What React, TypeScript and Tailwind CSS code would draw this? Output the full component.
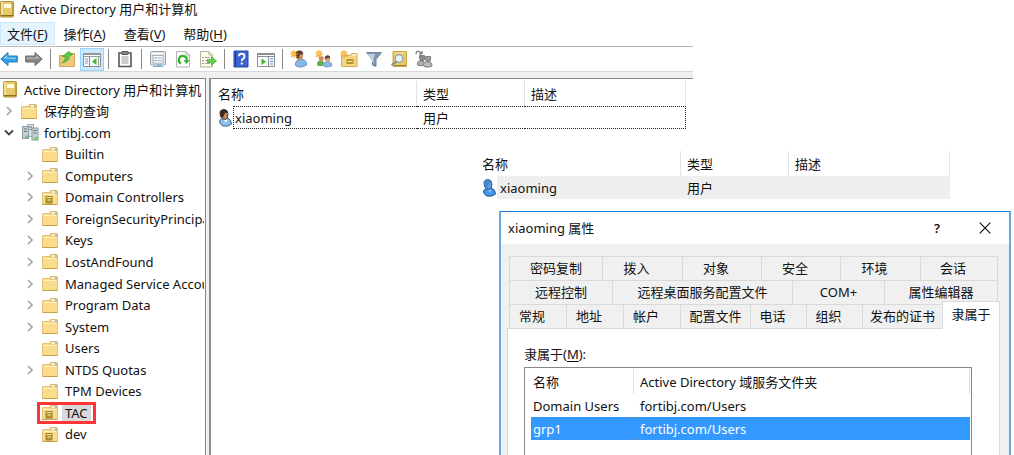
import type { ReactNode } from 'react';
import clsx from 'clsx';

/* ---------- icons ---------- */

function ConsoleIcon() {
    return (
        <svg viewBox="0 0 14 17" className="h-[17px] w-[14px] shrink-0" aria-hidden="true">
            <rect x="0.5" y="0.5" width="13" height="15.5" rx="1" fill="#c9a23c" stroke="#b8963c" />
            <rect x="1" y="1" width="11" height="13" fill="#e6c968" />
            <rect x="1" y="1" width="2" height="13" fill="#f4e3a0" />
            <rect x="4" y="3" width="7" height="4" fill="#fffbe6" />
            <path d="M1 14.5h12" stroke="#8d6d1c" />
        </svg>
    );
}

function FolderIcon({ unit = false }: { unit?: boolean }) {
    return (
        <svg viewBox="0 0 16 15" className="h-[15px] w-4 shrink-0" aria-hidden="true">
            <path d="M8 3.5V1.5Q8 .5 9 .5H14.5Q15.5 .5 15.5 1.5V5H8z" fill="#f5dc94" stroke="#dcb868" />
            <path d="M10 2h3" stroke="#fff" />
            <path d="M13 2h2" stroke="#5aa2dc" />
            <path d="M.5 3Q.5 2.5 1 2.5H8L9.5 4H15.5V14.5H.5z" fill="#fbdc8c" stroke="#e2c078" />
            <path d="M1.5 4.5H14.500" stroke="#fff0c0" />
            <path d="M.5 14.500H15.5" stroke="#c9a04a" />
            {unit && (
                <>
                    <rect x="4" y="6.500" width="6" height="6.500" fill="#b4942c" stroke="#9c8028" />
                    <path d="M4.500 7.500h5M5.500 10h3.500" stroke="#f4e6a4" />
                </>
            )}
        </svg>
    );
}

function DomainIcon() {
    return (
        <svg viewBox="0 0 17 17" className="h-[17px] w-[17px] shrink-0" aria-hidden="true">
            <rect x="5.500" y="0.500" width="6" height="12" fill="#dfe6ea" stroke="#9ba7b0" />
            <rect x="0.500" y="2.500" width="6" height="12" fill="#c8d1d8" stroke="#8c99a3" />
            <rect x="10" y="4" width="6" height="12" fill="#c8d1d8" stroke="#8c99a3" />
            <path d="M7 3h3M2 5h3M2 7.500h3M11.500 6.500h3M11.500 9h3M7.500 5.500h2" stroke="#5f6d78" />
            <rect x="3" y="11.500" width="3" height="2.500" fill="#5ad83c" />
            <rect x="12.500" y="13" width="3" height="2.500" fill="#5ad83c" />
        </svg>
    );
}

function Chevron({ open = false }: { open?: boolean }) {
    return (
        <svg viewBox="0 0 10 10" className="h-[10px] w-[10px]" fill="none" aria-hidden="true">
            {open ? (
                <path d="M1 2.500L5 6.500L9 2.500" stroke="#404040" strokeWidth="1.800" />
            ) : (
                <path d="M3 1L7 5L3 9" stroke="#a6a6a6" strokeWidth="1.700" />
            )}
        </svg>
    );
}

function UserIcon({ selected = false }: { selected?: boolean }) {
    return (
        <svg viewBox="0 0 15 18" className="h-[18px] w-[15px] shrink-0" aria-hidden="true">
            <path
                d="M1.500 12Q2 10 5 9.500L9.500 9Q13.500 10.500 13.500 15Q10 18.200 5 17Q1.500 15.500 1.500 12z"
                fill={selected ? '#3f97e8' : '#8dbdea'}
                stroke={selected ? '#1d5390' : '#3f6c98'}
            />
            <path
                d="M2 3Q2.500 .8 6 .6Q9.800 .8 9.800 4.500Q10 10 7.500 10.500Q4 10.500 2.500 7.500z"
                fill={selected ? '#5b9ddb' : '#c28a62'}
                stroke={selected ? '#1d5390' : '#4a2c1a'}
            />
            <path
                d="M2 3Q2.500 .8 6 .6Q9.800 .8 9.800 4Q7 3 6.500 5L5 8.500L2.500 7.500z"
                fill={selected ? '#4684c4' : '#3c2a20'}
            />
            <path d="M6 11l2 3l1.500-3.500" fill={selected ? '#8cc4f4' : '#fff'} />
        </svg>
    );
}

function Glyph({ children }: { children: ReactNode }) {
    return (
        <svg viewBox="0 0 18 18" className="h-[18px] w-[18px] shrink-0" fill="none" aria-hidden="true">
            {children}
        </svg>
    );
}

const spark = (
    <>
        <path d="M4 0v8M0 4h8M1.200 1.200l5.600 5.600M6.800 1.200L1.200 6.800" stroke="#f0a020" strokeWidth="1.100" />
        <circle cx="4" cy="4" r="1.600" fill="#ffc94a" />
    </>
);

const glyphs: Record<string, ReactNode> = {
    back: (
        <>
            <path d="M.8 9L8 2.500V6H17.300V12H8V15.500z" fill="#2f9fe4" stroke="#2a7db8" />
            <path d="M3 8.500L7 5V7.500H16V9z" fill="#85d0f8" />
        </>
    ),
    forward: (
        <>
            <path d="M17.200 9L10 2.500V6H.7V12H10V15.500z" fill="#868686" stroke="#6c6c6c" />
            <path d="M15 8.500L11 5V7.500H2V9z" fill="#b4b4b4" />
        </>
    ),
    up: (
        <>
            <path d="M1.500 5.500H8L10 3.500H16.500V16.500H1.500z" fill="#ecc97c" stroke="#cda458" />
            <path d="M11 5h5" stroke="#fff2cc" />
            <path
                d="M3.500 13Q7.500 11 7.500 6.500L4.500 6.500L10.500 1.500L15 4.500L11.500 6Q11 11.500 3.500 13z"
                fill="#5fc63e"
                stroke="#3f9f2c"
                strokeWidth=".7"
            />
        </>
    ),
    tree: (
        <>
            <path d="M.5 3.500H17.500V16.500H.5z" fill="#fafafa" stroke="#8a8f94" />
            <path d="M1 4.500H17M1 6.500H17" stroke="#9a9fa4" />
            <path d="M6.500 7V16" stroke="#8a8f94" />
            <path d="M2 9h3M2 11h3M2 13h3" stroke="#7fa4c8" />
            <path d="M13.500 8v7L9 11.500z" fill="#3eb82c" />
            <path d="M15.500 7v9" stroke="#9a9fa4" />
        </>
    ),
    clipboard: (
        <>
            <path d="M3 3H15V16.500H3z" fill="#fff" stroke="#585858" strokeWidth="1.600" />
            <path d="M6 1.500h6v3H6z" fill="#888" stroke="#585858" />
            <path d="M5.500 7h7M5.500 9h7M5.500 11h7M5.500 13h7" stroke="#9a9a9a" />
        </>
    ),
    properties: (
        <>
            <rect x="1.500" y="1.500" width="15" height="13.500" rx="1" fill="#dfe5ea" stroke="#9aa1a7" />
            <path d="M3 3.500h11" stroke="#fff" />
            <rect x="4" y="5.500" width="10" height="7.500" fill="#fff" stroke="#a4b0ba" />
            <path d="M5.500 8h2M5.500 10.500h2" stroke="#4884c4" />
            <path d="M8.500 8h4M8.500 10.500h4" stroke="#9aa4ac" />
            <path d="M4 16.500h10" stroke="#9aa1a7" />
            <path d="M8 14.500h4v2h-4z" fill="#6cb4e4" />
        </>
    ),
    refresh: (
        <>
            <path d="M2.500 1.500H12L15.500 5V17H2.500z" fill="#fdfdfd" stroke="#b4b4b4" />
            <path d="M12 1.500V5h3.500" stroke="#b4b4b4" />
            <path
                d="M7 13.500A4 4 0 1 1 12.800 10.500"
                stroke="#38b22c"
                strokeWidth="2.200"
            />
            <path d="M9.500 10h6l-3 4z" fill="#38b22c" />
        </>
    ),
    export: (
        <>
            <path d="M1.500 1.500H10L13.500 5V17H1.500z" fill="#fffbea" stroke="#b8b29a" />
            <path d="M10 1.500V5h3.500" stroke="#b8b29a" />
            <path d="M3.500 7.500h1M3.500 10.500h1M3.500 13.500h1" stroke="#444" />
            <path d="M6 7.500h5M6 10.500h3M6 13.500h5" stroke="#a4a4a4" />
            <path
                d="M8.500 9.500H12.500V6.800L17.500 11L12.500 15.200V12.500H8.500z"
                fill="#6ad04a"
                stroke="#3da42c"
                strokeWidth=".7"
            />
        </>
    ),
    help: (
        <>
            <path d="M2 1H16V17H2z" fill="#3c62d0" stroke="#2c48a4" />
            <path d="M3.500 1.500V16.500" stroke="#20388c" />
            <path
                d="M7 6.200Q7 3.800 9.700 3.800Q12.500 3.800 12.500 6.200Q12.500 7.800 11 8.700Q9.800 9.500 9.800 11"
                stroke="#fff"
                strokeWidth="1.900"
            />
            <rect x="8.800" y="12.500" width="2" height="2" fill="#fff" />
        </>
    ),
    console: (
        <>
            <path d="M.5 3.500H17.500V16.500H.5z" fill="#fafafa" stroke="#8a8f94" />
            <path d="M1 4.500H17M1 6.500H17" stroke="#8a8f94" />
            <path d="M11.500 7V16" stroke="#8a8f94" />
            <path d="M13 9h3M13 11.500h3M13 14h3" stroke="#5e8fc0" />
            <path d="M4.500 8.500v6.500L9 11.700z" fill="#3eb82c" />
        </>
    ),
    user: (
        <>
            <path
                d="M5.500 13Q6 10.500 9 9.500H13Q17 10.500 16.500 15Q12 18.500 6.500 16.500Q5 15.500 5.500 13z"
                fill="#86b8e8"
                stroke="#6a9ac8"
            />
            <path d="M5.500 3Q6 1 9.500 .8Q13 1 13 5Q13 10 10.500 10.500Q7 10.500 6 7z" fill="#c98d60" />
            <path d="M5.500 3Q6 .8 9.500 .6Q13.500 .8 13.200 5Q10.500 3 9.500 5.500L8.500 8.500L6 7.500z" fill="#5b4030" />
            {spark}
        </>
    ),
    group: (
        <>
            <path d="M2 14Q2 10.500 5.500 10.500Q9.500 10.500 9.500 15Q6 17 2.500 15.500z" fill="#5fae4a" />
            <path d="M4 6.500h4.500v3.500q-1 2-2.500 1.500q-2-.5-2-2.500z" fill="#c98d60" />
            <path d="M8.500 14.500Q9 11.500 12.500 11.500Q17 11.500 17 16Q12.500 18 9 16.500z" fill="#86b8e8" stroke="#6a9ac8" strokeWidth=".7" />
            <path d="M10 6.500h5v4q-1 2-2.500 1.500q-2.500-.5-2.500-3z" fill="#d8a070" />
            <path d="M9.700 9.500Q9.500 5.500 12.500 5.200Q15.500 5.500 15.200 8.500Q13 7 11.500 8.500z" fill="#5b4030" />
            {spark}
        </>
    ),
    unit: (
        <>
            <path d="M1.500 5.500H10L11.500 3.500H17V16.500H1.500z" fill="#f6d684" stroke="#d4ac58" />
            <path d="M12 5h4.500" stroke="#fff" />
            <rect x="6.500" y="9" width="7" height="5" fill="#b4942c" />
            <path d="M7.500 11.500h5" stroke="#f4e6a4" />
            {spark}
        </>
    ),
    filter: (
        <>
            <path d="M1.500 2.500H16.500L11 9.500V16.500L7.500 15V9.500z" fill="#7c98b0" stroke="#6c879e" />
            <path d="M3 4H10L8.500 9V14z" fill="#bcd0e0" />
        </>
    ),
    find: (
        <>
            <path d="M3 1.500H16.500V16.500H3z" fill="#e6c968" stroke="#c4a446" />
            <path d="M3.500 15.500H16.500" stroke="#a8862c" />
            <path d="M4 3h11" stroke="#f8e8a8" />
            <circle cx="9" cy="8.500" r="3.800" fill="#e8f4fc" stroke="#8a98a4" strokeWidth="1.200" />
            <path d="M6.500 11.500L1.500 15" stroke="#868e94" strokeWidth="2" />
        </>
    ),
    link: (
        <>
            <path d="M1 4.500Q1 1 3.500 1L6.500 3.500M7 4V1M7 4H4" stroke="#777" strokeWidth="1.200" />
            <path d="M2.500 14Q2.500 10.500 6 10.500Q9.500 10.500 9.500 14.500Q6 16.500 3 15.500z" fill="#b0b0b0" stroke="#7c7c7c" />
            <path d="M4.500 5.500h5v4q-1 2-2.500 1.500q-2.500-.5-2.500-3z" fill="#8a8a8a" stroke="#666" strokeWidth=".7" />
            <path d="M8.500 14.500Q9 11.500 12.500 11.500Q17 11.500 17 16Q12.500 18 9 16.500z" fill="#bcbcbc" stroke="#7c7c7c" />
            <path d="M10.500 6.500h5v4q-1 2-2.500 1.500q-2.500-.5-2.500-3z" fill="#9a9a9a" stroke="#666" strokeWidth=".7" />
        </>
    ),
};

/* ---------- data ---------- */

const menus = [
    { label: '文件', key: 'F', active: true },
    { label: '操作', key: 'A' },
    { label: '查看', key: 'V' },
    { label: '帮助', key: 'H' },
];

const toolbar = [
    ['back', '后退'],
    ['forward', '前进'],
    null,
    ['up', '上一级'],
    ['tree', '显示控制台树'],
    null,
    ['clipboard', '剪贴板'],
    null,
    ['properties', '属性'],
    ['refresh', '刷新'],
    ['export', '导出列表'],
    null,
    ['help', '帮助'],
    ['console', '操作窗格'],
    null,
    ['user', '新建用户'],
    ['group', '新建组'],
    ['unit', '新建组织单位'],
    ['filter', '筛选器'],
    ['find', '查找'],
    ['link', '添加到组'],
] as const;

const containers: { name: string; expandable?: boolean; unit?: boolean; selected?: boolean }[] = [
    { name: 'Builtin' },
    { name: 'Computers', expandable: true },
    { name: 'Domain Controllers', expandable: true, unit: true },
    { name: 'ForeignSecurityPrincipals', expandable: true },
    { name: 'Keys', expandable: true },
    { name: 'LostAndFound', expandable: true },
    { name: 'Managed Service Accounts', expandable: true },
    { name: 'Program Data', expandable: true },
    { name: 'System', expandable: true },
    { name: 'Users' },
    { name: 'NTDS Quotas', expandable: true },
    { name: 'TPM Devices' },
    { name: 'TAC', unit: true, selected: true },
    { name: 'dev', unit: true },
];

const tabRows = [
    {
        cols: 'mr-[2px] grid-cols-[93fr_80fr_79fr_79fr_80fr_78fr]',
        tabs: ['密码复制', '拨入', '对象', '安全', '环境', '会话'],
    },
    {
        cols: 'mr-[2px] grid-cols-[103fr_180fr_92fr_114fr]',
        tabs: ['远程控制', '远程桌面服务配置文件', 'COM+', '属性编辑器'],
    },
    {
        cols: 'grid-cols-[57fr_57fr_57fr_70fr_56fr_56fr_80fr_58fr]',
        tabs: ['常规', '地址', '帐户', '配置文件', '电话', '组织', '发布的证书', '隶属于'],
    },
];

/* ---------- parts ---------- */

function Toolbar() {
    return (
        <div className="flex h-6 items-center gap-[7px]">
            {toolbar.map((item, i) =>
                item ? (
                    <button
                        key={item[0]}
                        type="button"
                        aria-label={item[1]}
                        className={clsx(
                            'flex shrink-0 items-center justify-center',
                            item[0] === 'tree'
                                ? '-mx-[3px] h-[23px] w-6 border border-[#99d1ff] bg-[#cce8ff]'
                                : 'h-6 w-[18px]',
                        )}
                    >
                        <Glyph>{glyphs[item[0]]}</Glyph>
                    </button>
                ) : (
                    <span key={i} className="h-5 w-px bg-[#8c8c8c]" />
                ),
            )}
        </div>
    );
}

function Tree() {
    return (
        <nav className="w-[206px] shrink-0 overflow-hidden border-t border-r border-[#828790] pr-px">
            <ul className="grid h-[366px] auto-rows-fr overflow-hidden whitespace-nowrap">
                <li className="flex items-center gap-[7px] pl-[3px]">
                    <ConsoleIcon />
                    <span>Active Directory 用户和计算机</span>
                </li>
                <li className="flex items-center pl-1">
                    <span className="w-[17px]">
                        <Chevron />
                    </span>
                    <FolderIcon />
                    <span className="pl-[7px]">保存的查询</span>
                </li>
                <li className="flex items-center pl-1">
                    <span className="w-[18px]">
                        <Chevron open />
                    </span>
                    <DomainIcon />
                    <span className="pl-[5px]">fortibj.com</span>
                </li>
                {containers.map((c) => (
                    <li key={c.name} className="flex items-center pl-[25px]">
                        <span className="w-[17px] shrink-0">{c.expandable && <Chevron />}</span>
                        <span className="relative flex items-center">
                            <FolderIcon unit={c.unit} />
                            <span className={clsx('ml-1 px-[3px]', c.selected && 'bg-[#d9d9d9]')}>{c.name}</span>
                            {c.selected && (
                                <span className="absolute -inset-x-[5px] -inset-y-[2px] border-[3px] border-[#fb3538]" />
                            )}
                        </span>
                    </li>
                ))}
            </ul>
        </nav>
    );
}

function ObjectList({ highlighted = false }: { highlighted?: boolean }) {
    const cell = highlighted ? 'bg-[#efefef]' : 'border-y border-dotted border-[#222]';
    return (
        <table className="w-[468px] table-fixed border-separate border-spacing-0 text-left">
            <thead>
                <tr className="h-[25px]">
                    <th className="w-[199px] border-r border-[#e2e2e2] p-0 font-normal">名称</th>
                    <th className="w-[108px] border-r border-[#e2e2e2] p-0 pl-[6px] font-normal">类型</th>
                    <th className="border-r border-[#e2e2e2] p-0 pl-[6px] font-normal">描述</th>
                </tr>
            </thead>
            <tbody>
                <tr className="h-[23px]">
                    <td className="p-0">
                        <div className="flex h-[23px] items-center">
                            <UserIcon selected={highlighted} />
                            <span
                                className={clsx(
                                    'flex h-full flex-1 items-center',
                                    cell,
                                    highlighted ? 'pl-[3px]' : 'border-l pl-px',
                                )}
                            >
                                xiaoming
                            </span>
                        </div>
                    </td>
                    <td className={clsx('p-0 pl-[6px]', cell)}>用户</td>
                    <td className={clsx('p-0', cell, !highlighted && 'border-r')} />
                </tr>
            </tbody>
        </table>
    );
}

function Tabs() {
    return (
        <div role="tablist" className="mr-[9px] ml-2 pt-3">
            {tabRows.map((row) => (
                <div key={row.tabs[0]} className={clsx('grid h-6', row.cols)}>
                    {row.tabs.map((tab) => {
                        const current = tab === '隶属于';
                        return (
                            <button
                                key={tab}
                                type="button"
                                role="tab"
                                aria-selected={current}
                                className={clsx(
                                    'border-t border-l whitespace-nowrap',
                                    current
                                        ? 'relative -mt-[3px] -mb-px border-r border-[#dadada] bg-white pb-1'
                                        : 'border-[#d9d9d9] pb-[2px] last:border-r',
                                    tab.length === 2 && 'pr-3',
                                )}
                            >
                                {tab}
                            </button>
                        );
                    })}
                </div>
            ))}
        </div>
    );
}

function PropertiesDialog() {
    return (
        <section
            role="dialog"
            aria-labelledby="dialog-title"
            className="mr-[3px] ml-[288px] flex flex-1 flex-col border-x-2 border-t border-x-[#65a8e0] border-t-[#1a7fd0] bg-[#f0f0f0]"
        >
            <header className="flex h-8 items-center bg-white pl-[7px]">
                <h2 id="dialog-title" className="flex-1">
                    xiaoming 属性
                </h2>
                <button type="button" aria-label="帮助" className="w-12 text-[13px] font-semibold">
                    ?
                </button>
                <button type="button" aria-label="关闭" className="flex w-12 justify-center">
                    <svg viewBox="0 0 12 12" className="h-3 w-3" aria-hidden="true">
                        <path d="M.7 .7L11.300 11.300M11.300 .7L.7 11.300" stroke="#111" strokeWidth="1.200" />
                    </svg>
                </button>
            </header>
            <Tabs />
            <div className="mr-[9px] ml-[6px] flex flex-1 flex-col border-x border-t border-[#dadada] bg-white pr-[27px] pl-4">
                <p id="member-of" className="pt-4 pb-1">
                    隶属于(<u className="underline-offset-2">M</u>):
                </p>
                <div className="flex-1 border-x border-t border-[#828790] pt-px pr-px pl-[6px]">
                    <table
                        aria-labelledby="member-of"
                        className="w-full table-fixed border-separate border-spacing-0 text-left"
                    >
                        <thead>
                            <tr className="h-[25px]">
                                <th className="w-[103px] border-r border-[#e2e2e2] p-0 pl-[2px] font-normal">名称</th>
                                <th className="border-r border-[#e2e2e2] p-0 pl-[6px] font-normal">
                                    Active Directory 域服务文件夹
                                </th>
                            </tr>
                        </thead>
                        <tbody>
                            <tr className="h-[23px]">
                                <td className="p-0 pl-[2px]">Domain Users</td>
                                <td className="p-0 pl-[6px]">fortibj.com/Users</td>
                            </tr>
                            <tr className="h-[23px] bg-[#3399ff] text-white">
                                <td className="border-y border-l border-dotted border-[#b9773a] p-0 pl-px">grp1</td>
                                <td className="border-y border-r border-dotted border-[#b9773a] p-0 pl-[6px]">
                                    fortibj.com/Users
                                </td>
                            </tr>
                        </tbody>
                    </table>
                </div>
            </div>
        </section>
    );
}

export default function App() {
    return (
        <div className="flex min-h-screen flex-col overflow-hidden bg-white font-['Noto_Sans','Noto_Sans_CJK_SC',sans-serif] text-[13px] leading-[18px] text-[#111]">
            <header className="w-full max-w-[693px]">
                <div className="flex h-[22px] items-center gap-[6px] pb-1">
                    <ConsoleIcon />
                    <h1>Active Directory 用户和计算机</h1>
                </div>
                <div role="menubar" className="flex h-6">
                    {menus.map((m) => (
                        <button
                            key={m.key}
                            type="button"
                            role="menuitem"
                            className={clsx(
                                'h-[23px]',
                                m.active ? 'border border-[#cce8ff] bg-[#e5f3ff] px-[6px]' : 'px-[9px]',
                            )}
                        >
                            {m.label}(<u className="underline-offset-2">{m.key}</u>)
                        </button>
                    ))}
                </div>
                <div className="border-y border-t-[#b4b4b4] border-b-[#d8d8d8]">
                    <Toolbar />
                </div>
                <div className="h-[6px] bg-[#f0f0f0]" />
            </header>

            <div className="flex flex-1">
                <Tree />
                <div className="w-[3px] shrink-0 bg-[#f0f0f0]" />
                <main className="flex min-w-0 flex-1 flex-col border-l-2 border-[#8b8f97]">
                    <div className="h-px w-full max-w-[482px] bg-[#828790]" />
                    <div className="pt-[2px] pl-[7px]">
                        <ObjectList />
                    </div>
                    <div className="pt-[22px] pb-3 pl-[271px]">
                        <ObjectList highlighted />
                    </div>
                    <PropertiesDialog />
                </main>
            </div>
        </div>
    );
}
